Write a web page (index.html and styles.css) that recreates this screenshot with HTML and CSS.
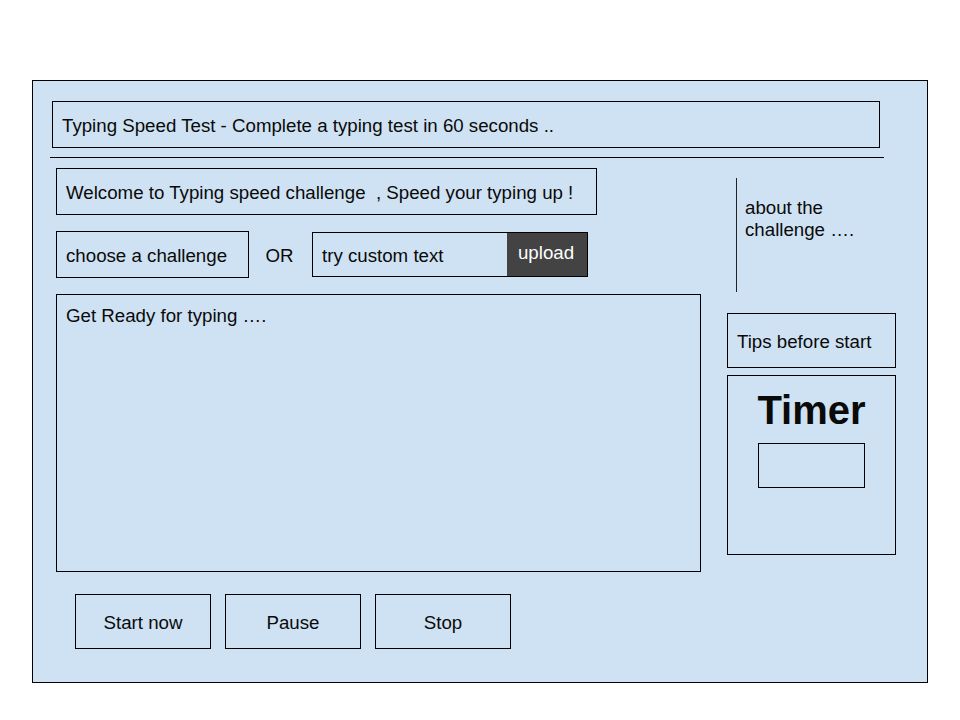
FILE: index.html
```html
<!DOCTYPE html>
<html>
<head>
<meta charset="utf-8">
<link rel="stylesheet" href="styles.css">
</head>
<body>
<div class="panel">
  <div class="title-box">Typing Speed Test - Complete a typing test in 60 seconds ..</div>
  <div class="rule"></div>
  <div class="main">
    <div class="left">
      <div class="welcome">Welcome to Typing speed challenge &nbsp;, Speed your typing up !</div>
      <div class="choice-row">
        <div class="choose">choose a challenge</div>
        <div class="or">OR</div>
        <div class="custom">
          <span class="custom-text">try custom text</span>
          <span class="upload">upload</span>
        </div>
      </div>
      <div class="typing-area">Get Ready for typing ….</div>
      <div class="buttons">
        <div class="btn">Start now</div>
        <div class="btn">Pause</div>
        <div class="btn">Stop</div>
      </div>
    </div>
    <div class="right">
      <div class="about">about the<br>challenge ….</div>
      <div class="tips">Tips before start</div>
      <div class="timer">
        <div class="timer-label">Timer</div>
        <div class="timer-value"></div>
      </div>
    </div>
  </div>
</div>
</body>
</html>
```

FILE: styles.css
```css
html, body {
  margin: 0;
  padding: 0;
  background: #ffffff;
}
body {
  font-family: "Liberation Sans", Arial, sans-serif;
  font-size: 18.7px;
  color: #0a0a0a;
  padding: 80px 0 0 32px;
}
.panel {
  box-sizing: border-box;
  width: 896px;
  height: 603px;
  border: 1px solid #000;
  background: #cfe2f3;
}
.title-box {
  box-sizing: border-box;
  margin: 20px 0 0 19px;
  width: 828px;
  height: 47px;
  border: 1px solid #000;
  padding: 2px 0 0 9px;
  display: flex;
  align-items: center;
}
.rule {
  margin: 9px 0 0 17px;
  width: 834px;
  height: 1px;
  background: #000;
}
.main {
  display: grid;
  grid-template-columns: 645px 169px;
  column-gap: 26px;
  margin: 10px 0 0 23px;
}
.left {
  display: flex;
  flex-direction: column;
}
.welcome {
  box-sizing: border-box;
  width: 541px;
  height: 47px;
  border: 1px solid #000;
  padding: 2px 0 0 9px;
  display: flex;
  align-items: center;
}
.choice-row {
  display: flex;
  align-items: center;
  margin-top: 16px;
  height: 47px;
}
.choose {
  box-sizing: border-box;
  width: 193px;
  height: 47px;
  border: 1px solid #000;
  padding: 2px 0 0 9px;
  display: flex;
  align-items: center;
}
.or {
  width: 63px;
  text-align: center;
  padding: 2px 2px 0 0;
  box-sizing: border-box;
}
.custom {
  box-sizing: border-box;
  width: 276px;
  height: 45px;
  border: 1px solid #000;
  display: flex;
  align-items: stretch;
}
.custom-text {
  flex: 1;
  display: flex;
  align-items: center;
  padding: 2px 0 0 9px;
}
.upload {
  width: 80px;
  background: #434343;
  color: #fff;
  text-align: center;
  padding: 9px 2px 0 0;
  box-sizing: border-box;
}
.typing-area {
  box-sizing: border-box;
  margin-top: 16px;
  width: 645px;
  height: 278px;
  border: 1px solid #000;
  padding: 10px 0 0 9px;
}
.buttons {
  display: flex;
  gap: 14px;
  margin: 22px 0 0 19px;
}
.btn {
  box-sizing: border-box;
  width: 136px;
  height: 55px;
  border: 1px solid #000;
  display: flex;
  align-items: center;
  justify-content: center;
  padding-top: 2px;
}
.right {
  display: flex;
  flex-direction: column;
  padding-top: 10px;
}
.about {
  box-sizing: border-box;
  margin-left: 9px;
  height: 114px;
  border-left: 1px solid #222;
  padding: 19px 0 0 8px;
  line-height: 22px;
}
.tips {
  box-sizing: border-box;
  margin-top: 21px;
  height: 55px;
  border: 1px solid #000;
  display: flex;
  align-items: center;
  padding: 2px 0 0 9px;
}
.timer {
  box-sizing: border-box;
  margin-top: 7px;
  height: 180px;
  border: 1px solid #000;
  display: flex;
  flex-direction: column;
  align-items: center;
}
.timer-label {
  font-weight: bold;
  font-size: 40px;
  line-height: 46px;
  margin-top: 11px;
}
.timer-value {
  box-sizing: border-box;
  margin-top: 10px;
  width: 107px;
  height: 45px;
  border: 1px solid #000;
}
```
